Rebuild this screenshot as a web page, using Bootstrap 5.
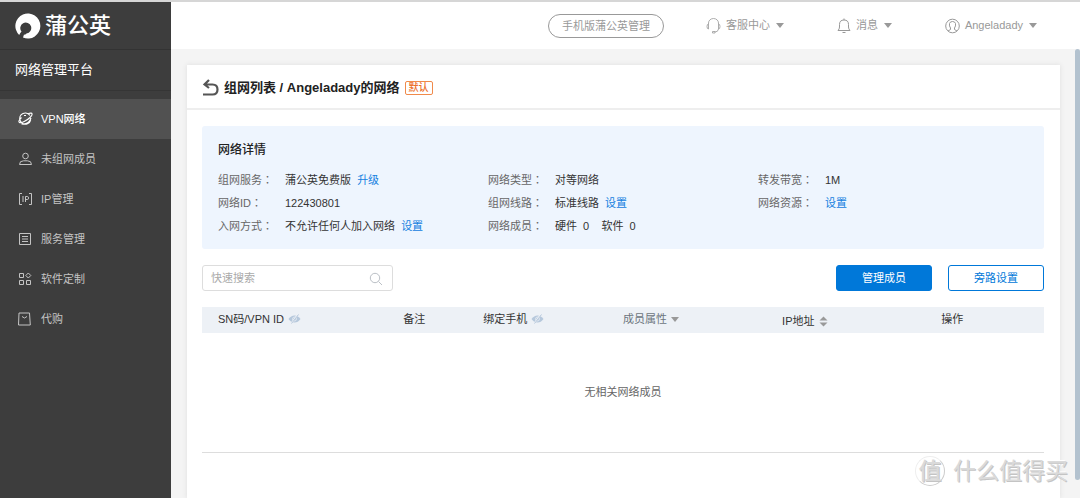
<!DOCTYPE html>
<html lang="zh-CN">
<head>
<meta charset="utf-8">
<meta name="viewport" content="width=device-width, initial-scale=1">
<title>蒲公英 网络管理平台</title>
<link href="https://cdn.jsdelivr.net/npm/bootstrap@5.3.0/dist/css/bootstrap.min.css" rel="stylesheet">
<style>
  body { font-family: "Liberation Sans", "Noto Sans CJK SC", sans-serif; font-size: 11px; line-height: 23px; color: #333; background: #f4f4f4; border-top: 2px solid #d6d6d6; height: 100vh; overflow: hidden; }
  svg { flex: none; fill: none; stroke: currentColor; }
  a { color: #1480e0; text-decoration: none; }
  .sidebar { width: 171px; background: #3d3d3d; color: #c4c4c4; }
  .brand { height: 48px; font-size: 22px; font-weight: 500; color: #fff; border-bottom: 1px solid #333; padding-left: 15px; }
  .platform { height: 41px; font-size: 13px; color: #fff; border-bottom: 1px solid #353535; padding: 0 0 2px 15px; }
  .side-menu a { height: 40px; gap: 8px; padding-left: 18px; color: #c4c4c4; }
  .side-menu a.active { background: #515151; color: #fff; }
  .page-col { min-width: 0; }
  .topbar { height: 47px; background: #fff; color: #999; padding-right: 43px; gap: 53px; }
  .topbar button { color: #999; background: none; border: 0; padding: 0; gap: 5px; }
  .topbar .mobile-btn { border: 1px solid #999; border-radius: 12px; height: 24px; padding: 0 13px; line-height: 22px; margin-right: -11px; }
  .caret { border: 4px solid transparent; border-top: 5px solid #999; border-bottom: 0; }
  .topbar .caret { margin-left: 1px; }
  .scroll-thumb { width: 5px; top: 47px; bottom: 18px; right: 0; background: #b3c2cf; border-radius: 3px; }
  .workspace { padding: 16px 20px 0 16px; }
  .sheet { background: #fff; box-shadow: 0 0 5px #dedede; }
  .sheet-head { height: 45px; border-bottom: 2px solid #eee; padding: 2px 15px 0; gap: 5px; }
  .sheet-head h1 { font-size: 13px; font-weight: 700; color: #222; }
  .sheet-body { padding: 16px 16px 16px 15px; }
  .cjk-mid { font-weight: 500; }
  .tag { border: 1px solid #f08a4b; border-radius: 2px; color: #ec6f2b; font-size: 10px; line-height: 12px; padding: 0 3px; font-weight: 500; }
  .details { background: #eef5fe; border-radius: 3px; padding: 13px 16px 11px; }
  .details h2 { font-size: 12px; font-weight: 500; line-height: 23px; color: #222; margin-bottom: 7px; }
  .details dt { width: 67px; font-weight: 400; color: #666; }
  .colon { font-family: "Noto Sans CJK TC", sans-serif; line-height: 1; }
  .search { width: 191px; height: 26px; border: 1px solid #ddd; border-radius: 3px; padding: 1px 9px 0 8px; color: #bbc0c6; }
  .search input { border: 0; outline: 0; background: none; min-width: 0; padding: 0; color: #333; }
  .search input::placeholder { color: #aaa; opacity: 1; }
  .action { width: 96px; height: 26px; padding: 0; font-size: 11px; border-color: #0078d9; border-radius: 3px; color: #0078d9; }
  .action.primary { background: #0078d9; color: #fff; }
  .members { table-layout: fixed; border-bottom: 1px solid #ddd; }
  .members th { height: 26px; padding: 0 0 2px; background: #edf1f6; font-weight: 400; line-height: 16px; }
  .members th.sortable { padding: 2px 0 0; }
  .members th:first-child { padding-left: 16px; }
  .members td { height: 119px; text-align: center; color: #666; }
  .members th > div { gap: 4px; }
  .hidden-eye { color: #b6c8dc; }
  .watermark { right: 12px; bottom: 12px; gap: 8px; color: #dadada; font-size: 23px; line-height: 28px; text-shadow: 1px 1px 0 #c4c4c4, -1px -1px 0 #fff; pointer-events: none; }
  .watermark b { width: 30px; height: 30px; border-radius: 50%; border: 1px solid #eee; border-right-color: #ccc; border-bottom-color: #ccc; text-align: center; font-weight: 500; }
</style>
</head>
<body class="d-flex position-relative">
  <aside class="sidebar flex-shrink-0">
    <div class="brand d-flex align-items-center gap-1">
      <svg width="26" height="26" viewBox="0 0 26 26"><path d="M4.200 22A12.500 12.500 0 1 1 8 24.500L9 21.500Q10.500 22 11.500 20.500A5.500 5.500 0 1 0 6.500 18.500Q5 20 4.200 22Z" fill="#fff" stroke="none"/></svg>
      <span>蒲公英</span>
    </div>
    <div class="platform d-flex align-items-center">网络管理平台</div>
    <nav class="side-menu d-flex flex-column pt-2">
      <a href="#" class="active d-flex align-items-center">
        <svg width="15" height="14" viewBox="0 0 15 14"><path d="M12 3.500A5.600 5.600 0 1 0 12.700 8M10.500 1.500C15 .2 15 2.500 12 5.500S3 11.500 1.500 10.500 1.500 7.500 3.500 5.500M3.500 12Q11 13 13 6M6 3.500h2" stroke-width="1.100"/></svg><span class="cjk-mid">VPN网络</span></a>
      <a href="#" class="d-flex align-items-center">
        <svg width="15" height="14" viewBox="0 0 15 14"><circle cx="7.500" cy="4" r="2.800"/><path d="M1.500 12.500Q1.500 8.800 5.500 8.800H9.500Q13.500 8.800 13.500 12.500Z"/></svg>未组网成员</a>
      <a href="#" class="d-flex align-items-center">
        <svg width="15" height="14" viewBox="0 0 15 14"><path d="M4 1.500H1.500V12.500H4M11 1.500H13.500V12.500H11M5 4V10M7.500 10V4.500H9.500Q10.500 4.500 10.500 6T9.500 7.500H7.500"/></svg>IP管理</a>
      <a href="#" class="d-flex align-items-center">
        <svg width="15" height="14" viewBox="0 0 15 14"><path d="M1.500 1.500H12.500V12.500H1.500ZM4 4.500H10M4 7H10M4 9.500H10"/></svg>服务管理</a>
      <a href="#" class="d-flex align-items-center">
        <svg width="15" height="14" viewBox="0 0 15 14"><path d="M1.500 1.500H5.500V5.500H1.500ZM1.500 8.500H5.500V12.500H1.500ZM8.500 8.500H12.500V12.500H8.500ZM10.300 1L12.800 3.500 10.300 6 7.800 3.500Z"/></svg>软件定制</a>
      <a href="#" class="d-flex align-items-center">
        <svg width="15" height="14" viewBox="0 0 15 14"><path d="M1 1H11.500L12.300 13H.5ZM4 4.500Q6.500 7.500 9 4.500"/></svg>代购</a>
    </nav>
  </aside>

  <div class="page-col flex-grow-1 d-flex flex-column">
    <header class="topbar flex-shrink-0 d-flex align-items-center justify-content-end">
      <button class="mobile-btn" type="button">手机版蒲公英管理</button>
      <button type="button" class="d-flex align-items-center">
        <svg width="15" height="16" viewBox="0 0 15 16"><path d="M2.500 6V5A5 4.500 0 0 1 12.500 5V6M2.500 6Q1 6 1 8.500T2.500 11ZM12.500 6Q14 6 14 8.500T12.500 11ZM12.500 11Q12 14 9 14M6.500 13.500H9V15H6.500Z" stroke-width=".8"/></svg>客服中心<i class="caret"></i></button>
      <button type="button" class="d-flex align-items-center">
        <svg width="14" height="16" viewBox="0 0 14 16"><path d="M1 12.500H13Q11.500 11 11.500 9V6.500Q11.500 2 7 2T2.500 6.500V9Q2.500 11 1 12.500ZM5.500 14.500H8.500M7 .5V2"/></svg>消息<i class="caret"></i></button>
      <button type="button" class="d-flex align-items-center">
        <svg width="15" height="16" viewBox="0 0 15 16"><circle cx="7.500" cy="8" r="6.800"/><path d="M3 13L5.500 11.500V10Q4 8 4.500 5.500 5 3.500 7.500 3.500T10.500 5.500Q11 8 9.500 10V11.500L12 13"/></svg>Angeladady<i class="caret"></i></button>
    </header>

    <main class="workspace flex-grow-1 d-flex flex-column">
      <section class="sheet flex-grow-1">
        <div class="sheet-head d-flex align-items-center">
          <svg width="17" height="17" viewBox="0 0 17 17"><path d="M1 15.500H10.500Q15.500 15.500 15.500 10.500T10.500 5.500H3M7 1L2.500 5.500 7 9" stroke="#555" stroke-width="2.200"/></svg>
          <h1 class="mb-0">组网列表 / Angeladady的网络</h1>
          <span class="tag">默认</span>
        </div>
        <div class="sheet-body">
          <section class="details">
            <h2>网络详情</h2>
            <dl class="row g-0 mb-0">
              <div class="col-4 d-flex"><dt>组网服务<span class="colon" lang="zh-TW">：</span></dt><dd class="mb-0">蒲公英免费版 &nbsp;<a href="#">升级</a></dd></div>
              <div class="col-4 d-flex"><dt>网络类型<span class="colon" lang="zh-TW">：</span></dt><dd class="mb-0">对等网络</dd></div>
              <div class="col-4 d-flex"><dt>转发带宽<span class="colon" lang="zh-TW">：</span></dt><dd class="mb-0">1M</dd></div>
              <div class="col-4 d-flex"><dt>网络ID<span class="colon" lang="zh-TW">：</span></dt><dd class="mb-0">122430801</dd></div>
              <div class="col-4 d-flex"><dt>组网线路<span class="colon" lang="zh-TW">：</span></dt><dd class="mb-0">标准线路 &nbsp;<a href="#">设置</a></dd></div>
              <div class="col-4 d-flex"><dt>网络资源<span class="colon" lang="zh-TW">：</span></dt><dd class="mb-0"><a href="#">设置</a></dd></div>
              <div class="col-4 d-flex"><dt>入网方式<span class="colon" lang="zh-TW">：</span></dt><dd class="mb-0">不允许任何人加入网络 &nbsp;<a href="#">设置</a></dd></div>
              <div class="col-4 d-flex"><dt>网络成员<span class="colon" lang="zh-TW">：</span></dt><dd class="mb-0">硬件 &nbsp;0 &nbsp; &nbsp;软件 &nbsp;0</dd></div>
            </dl>
          </section>

          <div class="d-flex align-items-center my-3">
            <label class="search d-flex align-items-center me-auto">
              <input class="flex-grow-1" type="text" placeholder="快速搜索" aria-label="快速搜索">
              <svg width="14" height="14" viewBox="0 0 14 14"><circle cx="6" cy="6" r="4.700"/><path d="M9.500 9.500L13 13"/></svg>
            </label>
            <button type="button" class="btn action primary me-3">管理成员</button>
            <button type="button" class="btn action">旁路设置</button>
          </div>

          <table class="members w-100">
            <colgroup><col style="width:23.9%"><col style="width:9.5%"><col style="width:16.6%"><col style="width:18.9%"><col style="width:18.9%"><col></colgroup>
            <thead><tr>
              <th><div class="d-flex align-items-center">SN码/VPN ID <svg class="hidden-eye" width="13" height="10" viewBox="0 0 13 10"><path d="M.5 5Q3 1.500 6.500 1.500T12.500 5Q10 8.500 6.500 8.500T.5 5Z" fill="currentColor" stroke="none"/><circle cx="6.500" cy="5" r="2" stroke="#edf1f6" stroke-width=".7"/><path d="M3 10L10 0" stroke="#edf1f6" stroke-width="1.600"/><path d="M3.500 9.500L10.500 .5"/></svg></div></th>
              <th>备注</th>
              <th><div class="d-flex align-items-center">绑定手机 <svg class="hidden-eye" width="13" height="10" viewBox="0 0 13 10"><path d="M.5 5Q3 1.500 6.500 1.500T12.500 5Q10 8.500 6.500 8.500T.5 5Z" fill="currentColor" stroke="none"/><circle cx="6.500" cy="5" r="2" stroke="#edf1f6" stroke-width=".7"/><path d="M3 10L10 0" stroke="#edf1f6" stroke-width="1.600"/><path d="M3.500 9.500L10.500 .5"/></svg></div></th>
              <th><div class="d-flex align-items-center text-secondary">成员属性<i class="caret"></i></div></th>
              <th class="sortable"><div class="d-flex align-items-center">IP地址 <svg width="9" height="11" viewBox="0 0 9 11"><path d="M.5 4.500L4.500 .5 8.500 4.500ZM.5 6.500L4.500 10.500 8.500 6.500Z" fill="#999" stroke="none"/></svg></div></th>
              <th>操作</th>
            </tr></thead>
            <tbody><tr><td colspan="6">无相关网络成员</td></tr></tbody>
          </table>
        </div>
      </section>
    </main>
  </div>
  <div class="scroll-thumb position-absolute"></div>
  <div class="watermark position-absolute d-flex align-items-center"><b>值</b><span>什么值得买</span></div>
<script src="https://cdn.jsdelivr.net/npm/bootstrap@5.3.0/dist/js/bootstrap.bundle.min.js"></script>
</body>
</html>
